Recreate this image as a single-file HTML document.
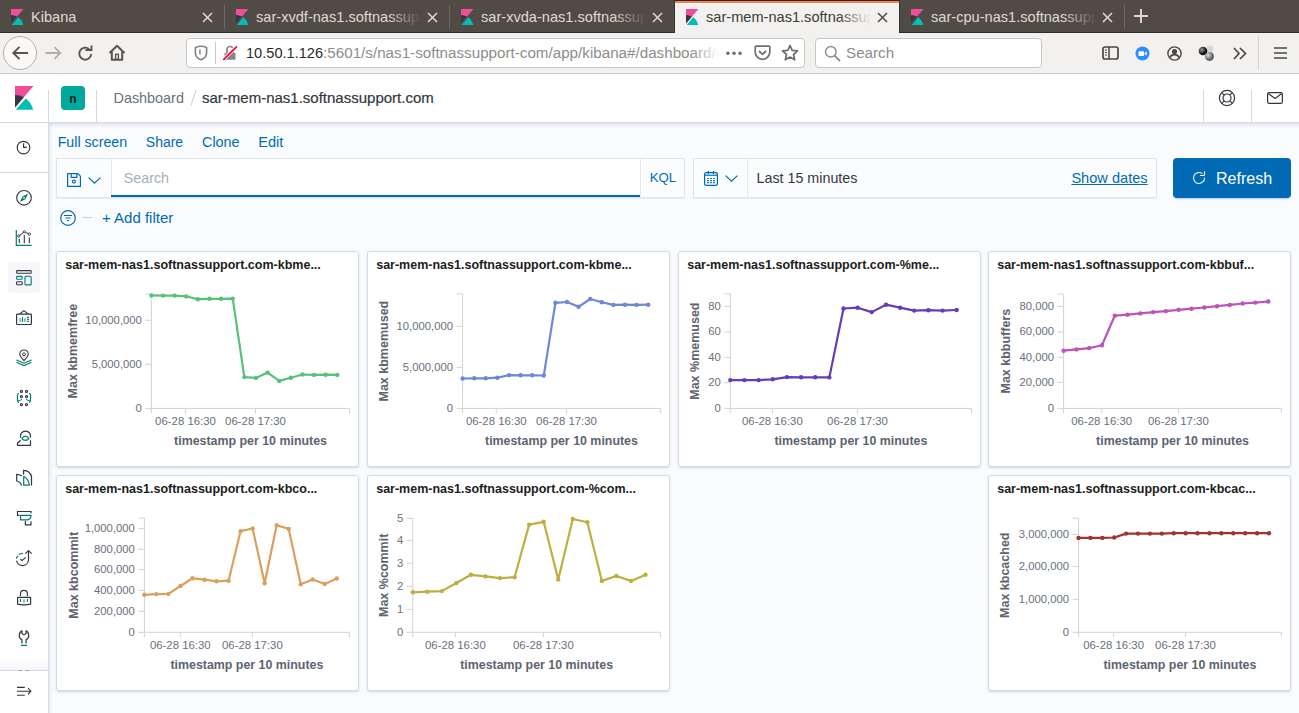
<!DOCTYPE html><html><head><meta charset="utf-8"><style>
*{box-sizing:border-box;margin:0;padding:0}
html,body{width:1299px;height:713px;overflow:hidden;background:#fafbfd;font-family:"Liberation Sans",sans-serif;position:relative}
.a{position:absolute;white-space:nowrap}
svg{position:absolute;overflow:visible}
svg text{font-family:"Liberation Sans",sans-serif}
</style></head><body>
<div class="a" style="left:0;top:0;width:1299px;height:33px;background:#504c45"></div>
<div class="a" style="left:0;top:32px;width:1299px;height:1px;background:#2f2d29"></div>
<svg style="left:8.7px;top:9px" width="16.0" height="16.0" viewBox="0 0 32 32"><path fill="#F04E98" d="M4 0v28.789L28.935.017z"/><path fill="#343741" d="M4 12v16.789l11.906-13.738A24.721 24.721 0 0 0 4 12"/><path fill="#00BFB3" d="M18.479 16.664L6.268 30.754l-1.073 1.237h23.191c-1.252-6.292-4.883-11.719-9.908-15.327"/></svg>
<div class="a" style="left:31px;top:7px;width:164px;height:20px;overflow:hidden;font-size:14.6px;color:#dfdbd2;line-height:20px">Kibana</div>
<div class="a" style="left:163px;top:6px;width:33px;height:22px;background:linear-gradient(to right,#504c4500,#504c45)"></div>
<svg style="left:201.5px;top:11.5px" width="11" height="11" viewBox="0 0 11 11"><path d="M1 1L10 10M10 1L1 10" stroke="#dfdbd2" stroke-width="1.5"/></svg>
<div class="a" style="left:224px;top:5px;width:1px;height:24px;background:#6e6a63"></div>
<svg style="left:233.7px;top:9px" width="16.0" height="16.0" viewBox="0 0 32 32"><path fill="#F04E98" d="M4 0v28.789L28.935.017z"/><path fill="#343741" d="M4 12v16.789l11.906-13.738A24.721 24.721 0 0 0 4 12"/><path fill="#00BFB3" d="M18.479 16.664L6.268 30.754l-1.073 1.237h23.191c-1.252-6.292-4.883-11.719-9.908-15.327"/></svg>
<div class="a" style="left:256px;top:7px;width:164px;height:20px;overflow:hidden;font-size:14.6px;color:#dfdbd2;line-height:20px">sar-xvdf-nas1.softnassupport</div>
<div class="a" style="left:388px;top:6px;width:33px;height:22px;background:linear-gradient(to right,#504c4500,#504c45)"></div>
<svg style="left:426.5px;top:11.5px" width="11" height="11" viewBox="0 0 11 11"><path d="M1 1L10 10M10 1L1 10" stroke="#dfdbd2" stroke-width="1.5"/></svg>
<div class="a" style="left:449px;top:5px;width:1px;height:24px;background:#6e6a63"></div>
<svg style="left:458.7px;top:9px" width="16.0" height="16.0" viewBox="0 0 32 32"><path fill="#F04E98" d="M4 0v28.789L28.935.017z"/><path fill="#343741" d="M4 12v16.789l11.906-13.738A24.721 24.721 0 0 0 4 12"/><path fill="#00BFB3" d="M18.479 16.664L6.268 30.754l-1.073 1.237h23.191c-1.252-6.292-4.883-11.719-9.908-15.327"/></svg>
<div class="a" style="left:481px;top:7px;width:164px;height:20px;overflow:hidden;font-size:14.6px;color:#dfdbd2;line-height:20px">sar-xvda-nas1.softnassupport</div>
<div class="a" style="left:613px;top:6px;width:33px;height:22px;background:linear-gradient(to right,#504c4500,#504c45)"></div>
<svg style="left:651.5px;top:11.5px" width="11" height="11" viewBox="0 0 11 11"><path d="M1 1L10 10M10 1L1 10" stroke="#dfdbd2" stroke-width="1.5"/></svg>
<div class="a" style="left:675px;top:0;width:224px;height:33px;background:#f2f1f0"></div>
<div class="a" style="left:675px;top:0;width:225px;height:1px;background:#262b2a"></div>
<div class="a" style="left:675px;top:1px;width:224px;height:2px;background:#f87f4f"></div>
<div class="a" style="left:675px;top:3px;width:224px;height:1px;background:#fafafa"></div>
<div class="a" style="left:674px;top:0;width:1px;height:33px;background:#35332f"></div>
<div class="a" style="left:899px;top:0;width:1px;height:32px;background:#35332f"></div>
<svg style="left:683.7px;top:9px" width="16.0" height="16.0" viewBox="0 0 32 32"><path fill="#F04E98" d="M4 0v28.789L28.935.017z"/><path fill="#343741" d="M4 12v16.789l11.906-13.738A24.721 24.721 0 0 0 4 12"/><path fill="#00BFB3" d="M18.479 16.664L6.268 30.754l-1.073 1.237h23.191c-1.252-6.292-4.883-11.719-9.908-15.327"/></svg>
<div class="a" style="left:706px;top:7px;width:164px;height:20px;overflow:hidden;font-size:14.6px;color:#3c3b37;line-height:20px">sar-mem-nas1.softnassupport</div>
<div class="a" style="left:838px;top:6px;width:33px;height:22px;background:linear-gradient(to right,#f2f1f000,#f2f1f0)"></div>
<svg style="left:876.5px;top:11.5px" width="11" height="11" viewBox="0 0 11 11"><path d="M1 1L10 10M10 1L1 10" stroke="#4c4b47" stroke-width="1.5"/></svg>
<svg style="left:908.7px;top:9px" width="16.0" height="16.0" viewBox="0 0 32 32"><path fill="#F04E98" d="M4 0v28.789L28.935.017z"/><path fill="#343741" d="M4 12v16.789l11.906-13.738A24.721 24.721 0 0 0 4 12"/><path fill="#00BFB3" d="M18.479 16.664L6.268 30.754l-1.073 1.237h23.191c-1.252-6.292-4.883-11.719-9.908-15.327"/></svg>
<div class="a" style="left:931px;top:7px;width:164px;height:20px;overflow:hidden;font-size:14.6px;color:#dfdbd2;line-height:20px">sar-cpu-nas1.softnassupport</div>
<div class="a" style="left:1063px;top:6px;width:33px;height:22px;background:linear-gradient(to right,#504c4500,#504c45)"></div>
<svg style="left:1101.5px;top:11.5px" width="11" height="11" viewBox="0 0 11 11"><path d="M1 1L10 10M10 1L1 10" stroke="#dfdbd2" stroke-width="1.5"/></svg>
<div class="a" style="left:1124px;top:5px;width:1px;height:24px;background:#6e6a63"></div>
<svg style="left:1134px;top:9px" width="14" height="14" viewBox="0 0 14 14"><path d="M7 0V14M0 7H14" stroke="#dfdbd2" stroke-width="1.9"/></svg>
<div class="a" style="left:0;top:33px;width:1299px;height:41px;background:#f2f1f0"></div>
<div class="a" style="left:0;top:73px;width:1299px;height:1px;background:#cdcbc8"></div>
<div class="a" style="left:3px;top:36px;width:34px;height:34px;border-radius:50%;border:1px solid #b3b1ad;background:#faf9f8"></div>
<svg style="left:11px;top:45px" width="18" height="16" viewBox="0 0 18 16"><path d="M17 8H2.5M8.5 1.8L2.3 8L8.5 14.2" stroke="#575653" stroke-width="1.9" fill="none"/></svg>
<svg style="left:45px;top:46px" width="17" height="14" viewBox="0 0 17 14"><path d="M0.5 7H15M9.5 1.2L15.3 7L9.5 12.8" stroke="#b0afac" stroke-width="1.8" fill="none"/></svg>
<svg style="left:77px;top:45px" width="17" height="17" viewBox="0 0 17 17"><path d="M14.2 9A6 6 0 1 1 12.2 4.2" stroke="#575653" stroke-width="1.9" fill="none"/><path d="M8.5 5H14.5V0.6" stroke="#575653" stroke-width="1.9" fill="none"/></svg>
<svg style="left:108px;top:44px" width="18" height="18" viewBox="0 0 18 18"><path d="M1.5 9L9 1.8L16.5 9M3.8 7.5V15.8H14.2V7.5" stroke="#575653" stroke-width="2" fill="none" stroke-linejoin="round"/><rect x="7.6" y="10.3" width="2.8" height="5" stroke="#575653" stroke-width="1.3" fill="none"/></svg>
<div class="a" style="left:186px;top:38px;width:619px;height:30px;background:#fff;border:1px solid #c9c7c4;border-radius:4px"></div>
<svg style="left:194px;top:45px" width="14" height="16" viewBox="0 0 14 16"><path d="M7 1.3C9 1.3 11 1.8 12.6 2.6V7.5C12.6 11 10.3 13.6 7 14.8C3.7 13.6 1.4 11 1.4 7.5V2.6C3 1.8 5 1.3 7 1.3Z" stroke="#808080" stroke-width="1.6" fill="none"/><path d="M5.2 4.5L6.6 4.2V10L5.2 9Z" fill="#808080"/></svg>
<div class="a" style="left:215px;top:42px;width:1px;height:22px;background:#c9c7c4"></div>
<svg style="left:222px;top:45px" width="16" height="16" viewBox="0 0 16 16"><path d="M2.5 8H13.5V13.8A1 1 0 0 1 12.5 14.8H3.5A1 1 0 0 1 2.5 13.8Z" fill="#878787"/><path d="M5 8V4.5A3 3 0 0 1 11 4.5V8" stroke="#878787" stroke-width="1.7" fill="none"/><path d="M0.5 15.5L15.5 0.5" stroke="#fff" stroke-width="3.2"/><path d="M1.8 14.4L14.4 1.8" stroke="#ff0039" stroke-width="1.8" stroke-linecap="round"/></svg>
<div class="a" style="left:246px;top:44px;font-size:15.2px;line-height:18px;color:#8e8d8a;width:472px;overflow:hidden"><span style="color:#2a2a28;font-size:14.6px">10.50.1.126</span>:5601/s/nas1-softnassupport-com/app/kibana#/dashboard/e0a1b2</div>
<div class="a" style="left:692px;top:40px;width:27px;height:26px;background:linear-gradient(to right,#fff0,#fff)"></div>
<svg style="left:725px;top:51px" width="18" height="5" viewBox="0 0 18 5"><circle cx="2.9" cy="2.3" r="1.75" fill="#6e6e6e"/><circle cx="9" cy="2.3" r="1.75" fill="#6e6e6e"/><circle cx="15.1" cy="2.3" r="1.75" fill="#6e6e6e"/></svg>
<svg style="left:753.5px;top:45px" width="17" height="16" viewBox="0 0 17 16"><path d="M2.2 1.2H14.8A1 1 0 0 1 15.8 2.2V7A7.3 7.3 0 0 1 1.2 7V2.2A1 1 0 0 1 2.2 1.2Z" stroke="#6e6e6e" stroke-width="1.7" fill="none"/><path d="M5 6L8.5 9.3L12 6" stroke="#6e6e6e" stroke-width="1.8" fill="none"/></svg>
<svg style="left:781px;top:44px" width="18" height="18" viewBox="0 0 18 18"><path d="M9 1.5L11.2 6.4L16.5 6.9L12.5 10.5L13.7 15.8L9 13L4.3 15.8L5.5 10.5L1.5 6.9L6.8 6.4Z" stroke="#6e6e6e" stroke-width="1.7" fill="none" stroke-linejoin="round"/></svg>
<div class="a" style="left:815px;top:38px;width:227px;height:30px;background:#fff;border:1px solid #c9c7c4;border-radius:4px"></div>
<svg style="left:824px;top:45px" width="17" height="17" viewBox="0 0 17 17"><circle cx="6.8" cy="6.8" r="5.3" stroke="#8e8e8e" stroke-width="1.5" fill="none"/><path d="M10.8 10.8L15.5 15.5" stroke="#8e8e8e" stroke-width="1.8" stroke-linecap="round"/></svg>
<div class="a" style="left:846px;top:44px;font-size:15.2px;line-height:18px;color:#8e8d8a">Search</div>
<svg style="left:1102px;top:46px" width="17" height="14" viewBox="0 0 17 14"><rect x="1" y="1" width="15" height="12" rx="2" stroke="#4a4946" stroke-width="1.7" fill="none"/><path d="M7 1V13" stroke="#4a4946" stroke-width="1.5"/><path d="M3 4H5M3 6.5H5M3 9H5" stroke="#4a4946" stroke-width="1"/></svg>
<svg style="left:1135px;top:46px" width="15" height="15" viewBox="0 0 15 15"><circle cx="7.5" cy="7.5" r="7" fill="#2d8cff"/><path d="M3.5 5.2H8.3A0.8 0.8 0 0 1 9.1 6V10H4.3A0.8 0.8 0 0 1 3.5 9.2Z" fill="#fff"/><path d="M9.6 7L11.8 5.4V9.6L9.6 8Z" fill="#fff"/></svg>
<svg style="left:1167px;top:46px" width="15" height="15" viewBox="0 0 15 15"><circle cx="7.5" cy="7.5" r="6.6" stroke="#4a4946" stroke-width="1.4" fill="none"/><circle cx="7.5" cy="5.6" r="2.6" fill="#4a4946"/><path d="M2.8 11.5C4 9.3 5.7 8.6 7.5 8.6S11 9.3 12.2 11.5" stroke="#4a4946" stroke-width="1.6" fill="none"/></svg>
<svg style="left:1198px;top:45px" width="18" height="17" viewBox="0 0 18 17"><defs><radialGradient id="bg1" cx="35%" cy="35%"><stop offset="0" stop-color="#999"/><stop offset="1" stop-color="#111"/></radialGradient><radialGradient id="bg2" cx="35%" cy="35%"><stop offset="0" stop-color="#ddd"/><stop offset="1" stop-color="#666"/></radialGradient></defs><circle cx="12" cy="4" r="3.5" fill="#d8d8d8"/><circle cx="5" cy="6" r="4.3" fill="url(#bg1)"/><circle cx="11.5" cy="11.5" r="4.5" fill="url(#bg2)"/></svg>
<svg style="left:1233px;top:47px" width="14" height="13" viewBox="0 0 14 13"><path d="M1 1L6 6.5L1 12M7 1L12.5 6.5L7 12" stroke="#4a4946" stroke-width="1.7" fill="none"/></svg>
<div class="a" style="left:1258px;top:36px;width:1px;height:34px;background:#d6d4d1"></div>
<svg style="left:1274px;top:47px" width="13" height="12" viewBox="0 0 13 12"><path d="M0 1H13M0 6H13M0 11H13" stroke="#4a4946" stroke-width="1.6"/></svg>
<div class="a" style="left:0;top:74px;width:1299px;height:49px;background:#fff;border-bottom:1px solid #d3dae6"></div>
<div class="a" style="left:0;top:123px;width:1299px;height:5px;background:linear-gradient(rgba(152,162,179,.28),rgba(152,162,179,.08) 60%,rgba(152,162,179,0))"></div>
<svg style="left:11.96px;top:86px" width="23.808" height="23.808" viewBox="0 0 32 32"><path fill="#F04E98" d="M4 0v28.789L28.935.017z"/><path fill="#343741" d="M4 12v16.789l11.906-13.738A24.721 24.721 0 0 0 4 12"/><path fill="#00BFB3" d="M18.479 16.664L6.268 30.754l-1.073 1.237h23.191c-1.252-6.292-4.883-11.719-9.908-15.327"/></svg>
<div class="a" style="left:48px;top:90px;width:1px;height:33px;background:#d3dae6"></div>
<div class="a" style="left:61px;top:86px;width:24px;height:24px;background:#00a99c;border-radius:4px;color:#1a1c21;font-size:12px;font-weight:bold;text-align:center;line-height:26px">n</div>
<div class="a" style="left:96px;top:90px;width:1px;height:33px;background:#d3dae6"></div>
<div class="a" style="left:113.5px;top:90px;font-size:14.4px;line-height:17px;color:#69707d">Dashboard</div>
<svg style="left:0;top:0" width="300" height="120"><path d="M195.9 90L191.1 105.4" stroke="#c9ced6" stroke-width="1"/></svg>
<div class="a" style="left:202px;top:89.2px;font-size:15px;line-height:17px;color:#343741;-webkit-text-stroke:0.2px #343741">sar-mem-nas1.softnassupport.com</div>
<div class="a" style="left:1203px;top:90px;width:1px;height:33px;background:#d3dae6"></div>
<div class="a" style="left:1251px;top:90px;width:1px;height:33px;background:#d3dae6"></div>
<svg style="left:1218px;top:89.2px" width="18" height="18" viewBox="0 0 18 18"><circle cx="9" cy="9" r="7.6" stroke="#343741" stroke-width="1.2" fill="none"/><circle cx="9" cy="9" r="4" stroke="#343741" stroke-width="1.2" fill="none"/><path d="M3.6 3.6L6.2 6.2M14.4 3.6L11.8 6.2M3.6 14.4L6.2 11.8M14.4 14.4L11.8 11.8" stroke="#343741" stroke-width="1.2"/></svg>
<svg style="left:1267px;top:92px" width="16" height="12" viewBox="0 0 16 12"><rect x="0.6" y="0.6" width="14.8" height="10.8" rx="1.6" stroke="#343741" stroke-width="1.2" fill="none"/><path d="M1.2 1.4L8 6.4L14.8 1.4" stroke="#343741" stroke-width="1.2" fill="none"/></svg>
<div class="a" style="left:0;top:123px;width:48px;height:590px;background:#fff"></div>
<div class="a" style="left:48px;top:123px;width:1px;height:590px;background:#d3dae6"></div>
<div class="a" style="left:49px;top:123px;width:4px;height:590px;background:linear-gradient(to right,rgba(152,162,179,.18),rgba(152,162,179,0))"></div>
<div class="a" style="left:0;top:172px;width:48px;height:1px;background:#d3dae6"></div>
<div class="a" style="left:0;top:670px;width:48px;height:1px;background:#d3dae6"></div>
<div class="a" style="left:8px;top:262px;width:32px;height:31px;background:#f5f7fa;border-radius:4px"></div>
<div class="a" style="left:0;top:657px;width:48px;height:13px;background:linear-gradient(#fff0,#f5f7fa)"></div>
<svg style="left:0;top:0" width="49" height="713" viewBox="0 0 49 713"><circle cx="23.5" cy="147.6" r="6.3" stroke="#343741" stroke-width="1.15" fill="none"/><path d="M23.6 143.3V147.4H26.8" stroke="#343741" stroke-width="1.15" fill="none"/><circle cx="24" cy="197.8" r="7.3" stroke="#343741" stroke-width="1.15" fill="none"/><path d="M28.2 193.6L25.4 199.2L19.8 202L22.6 196.4Z" fill="#017d73"/><circle cx="24" cy="197.8" r="0.9" fill="#fff"/><path d="M16.3 230V245.3H31.6" stroke="#017d73" stroke-width="1.2" fill="none"/><path d="M19.3 239V243.2M24.3 235V243.2M29.3 237.5V243.2" stroke="#343741" stroke-width="1.1"/><path d="M18.8 236L24.3 231.8L29.3 234.1" stroke="#343741" stroke-width="1" fill="none"/><circle cx="18.8" cy="236" r="1.2" stroke="#343741" stroke-width="0.9" fill="#fff"/><circle cx="24.3" cy="231.8" r="1.2" stroke="#343741" stroke-width="0.9" fill="#fff"/><circle cx="29.3" cy="234.1" r="1.2" stroke="#343741" stroke-width="0.9" fill="#fff"/><rect x="16.6" y="270.6" width="14.6" height="2.6" rx="0.8" stroke="#343741" stroke-width="1.1" fill="none"/><rect x="16.6" y="276.4" width="5.6" height="2.8" rx="0.8" stroke="#017d73" stroke-width="1.1" fill="none"/><rect x="16.6" y="281.8" width="5.6" height="3" rx="0.8" stroke="#343741" stroke-width="1.1" fill="none"/><rect x="25" y="276.3" width="6.2" height="8.6" rx="1" stroke="#017d73" stroke-width="1.1" fill="none"/><rect x="16.6" y="314.2" width="14.8" height="10.3" rx="0.8" stroke="#343741" stroke-width="1.2" fill="none"/><path d="M19.6 314L23.9 310.6L28.2 314" stroke="#343741" stroke-width="1.1" fill="none"/><rect x="19.4" y="318.3" width="1.5" height="3.6" fill="#017d73" fill-opacity=".6"/><rect x="21.9" y="317.1" width="1.2" height="4.8" fill="#017d73"/><rect x="24.2" y="318.2" width="1.5" height="3.7" fill="#017d73" fill-opacity=".6"/><path d="M26.9 317.4H28.9M26.9 319.4H28.9M26.9 321.4H28.9" stroke="#017d73" stroke-width="1.1"/><path d="M24 360.5C21.2 357.5 19.8 355.6 19.8 354.2A4.2 4.2 0 0 1 28.2 354.2C28.2 355.6 26.8 357.5 24 360.5Z" stroke="#343741" stroke-width="1.1" fill="none"/><circle cx="24" cy="354.3" r="1.4" stroke="#343741" stroke-width="1" fill="none"/><path d="M16.5 360L24 363.2L31.5 360M16.5 362.3L24 365.5L31.5 362.3" stroke="#017d73" stroke-width="1.2" fill="none"/><g fill="none" stroke="#343741" stroke-width="1.15"><circle cx="21.4" cy="391.4" r="1.05"/><circle cx="26.5" cy="391.4" r="1.05"/><circle cx="21.4" cy="396.5" r="1.05"/><circle cx="26.5" cy="396.5" r="1.05"/><circle cx="21.4" cy="404.5" r="1.05"/><circle cx="26.5" cy="404.5" r="1.05"/></g><path d="M18.6 393.5Q17.5 393.9 17.5 395.2V401L18.6 402.4M21.4 399.5Q20.5 400.6 17.7 401M29.4 393.5Q30.5 393.9 30.5 395.2V401L29.4 402.4M26.6 399.5Q27.5 400.6 30.3 401" stroke="#017d73" stroke-width="1.15" fill="none" stroke-linecap="round"/><path d="M20.6 437.6A5.1 5.1 0 1 1 30.4 437.6" stroke="#343741" stroke-width="1.2" fill="none"/><path d="M30.5 440.3V445.3H17.5V443.2L20.6 440.2" stroke="#343741" stroke-width="1.2" fill="none" stroke-linejoin="round"/><path d="M22 438.6C23.5 435.2 27.3 435.2 28.8 438.6C27.3 440.9 23.5 440.9 22 438.6Z" stroke="#017d73" stroke-width="1.2" fill="none"/><path d="M21.7 476Q19.6 474.4 16.7 474.4V481Q20.8 481.8 21.4 485.6" stroke="#343741" stroke-width="1.2" fill="none"/><path d="M23.6 474.4V470.4Q29.8 470.6 31.5 476.5V485.6" stroke="#343741" stroke-width="1.2" fill="none"/><path d="M23.7 476.3V485.2H29.4Q28.6 479.2 23.7 476.3Z" stroke="#017d73" stroke-width="1.2" fill="none" stroke-linejoin="round"/><path d="M19.6 515.3H17.5V511.5H31V513.3" stroke="#343741" stroke-width="1.2" fill="none"/><path d="M20.6 515.4H31.2Q30.5 519.3 27.8 519.8H20.6Z" stroke="#017d73" stroke-width="1.2" fill="none" stroke-linejoin="round"/><path d="M25.4 521V524.9H31V521.3" stroke="#343741" stroke-width="1.2" fill="none"/><path d="M16.6 560.6A6 6 0 0 0 28.5 560V551.2M25.3 553.6L28.5 550.6L31.7 553.6" stroke="#343741" stroke-width="1.2" fill="none" stroke-linejoin="round"/><path d="M16.4 558.2L17.7 556.2M19.3 554.3L22.6 553.3" stroke="#017d73" stroke-width="1.2" fill="none" stroke-linecap="round"/><path d="M20.2 559.3L22.1 560.6L25.6 557.4" stroke="#343741" stroke-width="1.2" fill="none"/><path d="M20.5 595.6V593.8A3.45 3.45 0 0 1 27.4 593.8V595.6" stroke="#343741" stroke-width="1.2" fill="none" stroke-linecap="round"/><path d="M17.6 597.4H30.6V604.2Q24 605.6 17.6 604.2Z" stroke="#343741" stroke-width="1.2" fill="none" stroke-linejoin="round"/><path d="M20.5 599.4V601.5M27.4 599.4V601.5" stroke="#017d73" stroke-width="1.2" stroke-linecap="round"/><rect x="23.2" y="599.3" width="1.6" height="3.4" fill="#017d73" fill-opacity=".6"/><path d="M21.9 643.6V639.6Q19.3 638.3 19.3 635.4Q19.3 632.1 21.9 630.9V633.4Q24 635.9 26.1 633.4V630.9Q28.7 632.1 28.7 635.4Q28.7 638.3 26.1 639.6V643.6" stroke="#343741" stroke-width="1.2" fill="none" stroke-linejoin="round"/><path d="M21.5 645.4H26.5" stroke="#017d73" stroke-width="1.2" stroke-linecap="round"/><path d="M17 687.4H24.8M17 691.2H30.6M17 695.2H24.8M28 688.2L30.9 691.2L28 694.4" stroke="#343741" stroke-width="1.1" fill="none"/><path d="M18.7 670.5H22M25.6 670.5H28.9" stroke="#9aa0a9" stroke-width="1"/></svg>
<div class="a" style="left:57.7px;top:132.5px;font-size:14.2px;line-height:18px;color:#006bb4">Full screen</div>
<div class="a" style="left:145.8px;top:132.5px;font-size:14.0px;line-height:18px;color:#006bb4">Share</div>
<div class="a" style="left:202px;top:132.5px;font-size:14.4px;line-height:18px;color:#006bb4">Clone</div>
<div class="a" style="left:258.2px;top:132.5px;font-size:14.6px;line-height:18px;color:#006bb4">Edit</div>
<div class="a" style="left:56px;top:158px;width:629px;height:40px;background:#fbfcfd;border:1px solid #dfe4ec;box-shadow:0 1px 1px rgba(152,162,179,.15)"></div>
<div class="a" style="left:110.5px;top:159px;width:530px;height:38px;background:#fff"></div>
<div class="a" style="left:110.5px;top:159px;width:1px;height:38px;background:#e4e8ee"></div>
<div class="a" style="left:110.5px;top:195px;width:530px;height:2px;background:#006bb4"></div>
<div class="a" style="left:640px;top:159px;width:1px;height:38px;background:#e4e8ee"></div>
<svg style="left:67px;top:173px" width="14" height="14" viewBox="0 0 14 14"><path d="M0.6 0.6H10.8L13.4 3.2V13.4H0.6Z" stroke="#006bb4" stroke-width="1.2" fill="none" stroke-linejoin="round"/><path d="M4.2 0.6V4.3H9.9V0.6" stroke="#006bb4" stroke-width="1.2" fill="none"/><circle cx="6.9" cy="8.6" r="1.5" stroke="#006bb4" stroke-width="1.1" fill="none"/></svg>
<svg style="left:87.5px;top:176.5px" width="13" height="7" viewBox="0 0 13 7"><path d="M0.6 0.6L6.5 6.2L12.4 0.6" stroke="#006bb4" stroke-width="1.2" fill="none"/></svg>
<div class="a" style="left:123.7px;top:169px;font-size:14.3px;line-height:18px;color:#a7afbe">Search</div>
<div class="a" style="left:649.7px;top:169px;font-size:13.2px;line-height:18px;color:#006bb4">KQL</div>
<div class="a" style="left:693px;top:158px;width:464px;height:40px;background:#fbfcfd;border:1px solid #dfe4ec;box-shadow:0 1px 1px rgba(152,162,179,.15)"></div>
<div class="a" style="left:747px;top:159px;width:1px;height:38px;background:#e4e8ee"></div>
<svg style="left:704px;top:171px" width="14" height="15" viewBox="0 0 14 15"><rect x="0.6" y="1.6" width="12.8" height="12.8" rx="1.6" stroke="#006bb4" stroke-width="1.2" fill="none"/><path d="M0.6 4.2H13.4" stroke="#006bb4" stroke-width="1.2"/><path d="M4.3 0V3M9.5 0V3" stroke="#006bb4" stroke-width="1.2"/><path d="M3.1 7.5H4.9M6.1 7.5H7.9M9.1 7.5H10.9M3.1 9.6H4.9M6.1 9.6H7.9M9.1 9.6H10.9M3.1 11.6H4.9M6.1 11.6H7.9M9.1 11.6H10.9" stroke="#006bb4" stroke-width="1.1"/></svg>
<svg style="left:725px;top:175px" width="13" height="7" viewBox="0 0 13 7"><path d="M0.6 0.6L6.5 6.2L12.4 0.6" stroke="#006bb4" stroke-width="1.2" fill="none"/></svg>
<div class="a" style="left:756.5px;top:168.5px;font-size:14.3px;line-height:18px;color:#343741">Last 15 minutes</div>
<div class="a" style="left:1071.4px;top:169px;font-size:14.6px;line-height:18px;color:#006bb4;text-decoration:underline">Show dates</div>
<div class="a" style="left:1173px;top:158px;width:118px;height:40px;background:#006bb4;border-radius:4px;box-shadow:0 2px 2px -1px rgba(0,107,180,.3)"></div>
<svg style="left:1190.5px;top:170px" width="16" height="16" viewBox="0 0 16 16"><path fill="#fff" d="M11.228 2.942a.5.5 0 1 1-.538.842A5 5 0 1 0 13 8a.5.5 0 1 1 1 0 6 6 0 1 1-2.772-5.058zM14 1.5v3A1.5 1.5 0 0 1 12.5 6h-3a.5.5 0 0 1 0-1h3a.5.5 0 0 0 .5-.5v-3a.5.5 0 1 1 1 0z"/></svg>
<div class="a" style="left:1216px;top:170px;font-size:16px;line-height:18px;color:#fff">Refresh</div>
<svg style="left:60px;top:210px" width="16" height="16" viewBox="0 0 16 16"><circle cx="8" cy="8" r="7.3" stroke="#006bb4" stroke-width="1.2" fill="none"/><path d="M4 5.5H12M5.5 8H10.5M7 10.5H9" stroke="#006bb4" stroke-width="1.2"/></svg>
<div class="a" style="left:82px;top:217px;width:10px;height:1px;background:#c9d1dd"></div>
<div class="a" style="left:102px;top:209px;font-size:15px;line-height:18px;color:#006bb4">+ Add filter</div>
<div class="a" style="left:56px;top:251px;width:303px;height:216px;background:#fff;border:1px solid #d3dae6;border-radius:3px;box-shadow:0 1px 3px rgba(152,162,179,.25),0 2px 2px -1px rgba(152,162,179,.2)"></div>
<div class="a" style="left:65.2px;top:257.2px;font-size:12.5px;line-height:16px;font-weight:bold;color:#1a1c21">sar-mem-nas1.softnassupport.com-kbme...</div>
<div class="a" style="left:367px;top:251px;width:303px;height:216px;background:#fff;border:1px solid #d3dae6;border-radius:3px;box-shadow:0 1px 3px rgba(152,162,179,.25),0 2px 2px -1px rgba(152,162,179,.2)"></div>
<div class="a" style="left:376.2px;top:257.2px;font-size:12.5px;line-height:16px;font-weight:bold;color:#1a1c21">sar-mem-nas1.softnassupport.com-kbme...</div>
<div class="a" style="left:678px;top:251px;width:303px;height:216px;background:#fff;border:1px solid #d3dae6;border-radius:3px;box-shadow:0 1px 3px rgba(152,162,179,.25),0 2px 2px -1px rgba(152,162,179,.2)"></div>
<div class="a" style="left:687.2px;top:257.2px;font-size:12.5px;line-height:16px;font-weight:bold;color:#1a1c21">sar-mem-nas1.softnassupport.com-%me...</div>
<div class="a" style="left:988px;top:251px;width:303px;height:216px;background:#fff;border:1px solid #d3dae6;border-radius:3px;box-shadow:0 1px 3px rgba(152,162,179,.25),0 2px 2px -1px rgba(152,162,179,.2)"></div>
<div class="a" style="left:997.2px;top:257.2px;font-size:12.5px;line-height:16px;font-weight:bold;color:#1a1c21">sar-mem-nas1.softnassupport.com-kbbuf...</div>
<div class="a" style="left:56px;top:475px;width:303px;height:216px;background:#fff;border:1px solid #d3dae6;border-radius:3px;box-shadow:0 1px 3px rgba(152,162,179,.25),0 2px 2px -1px rgba(152,162,179,.2)"></div>
<div class="a" style="left:65.2px;top:481.2px;font-size:12.5px;line-height:16px;font-weight:bold;color:#1a1c21">sar-mem-nas1.softnassupport.com-kbco...</div>
<div class="a" style="left:367px;top:475px;width:303px;height:216px;background:#fff;border:1px solid #d3dae6;border-radius:3px;box-shadow:0 1px 3px rgba(152,162,179,.25),0 2px 2px -1px rgba(152,162,179,.2)"></div>
<div class="a" style="left:376.2px;top:481.2px;font-size:12.5px;line-height:16px;font-weight:bold;color:#1a1c21">sar-mem-nas1.softnassupport.com-%com...</div>
<div class="a" style="left:988px;top:475px;width:303px;height:216px;background:#fff;border:1px solid #d3dae6;border-radius:3px;box-shadow:0 1px 3px rgba(152,162,179,.25),0 2px 2px -1px rgba(152,162,179,.2)"></div>
<div class="a" style="left:997.2px;top:481.2px;font-size:12.5px;line-height:16px;font-weight:bold;color:#1a1c21">sar-mem-nas1.softnassupport.com-kbcac...</div>
<svg style="left:0;top:0" width="1299" height="713" viewBox="0 0 1299 713"><path d="M151.4 293.9V408.4H349.6" stroke="#d3d3d3" stroke-width="1" fill="none"/><path d="M145.4 293.9H151.4" stroke="#d3d3d3" stroke-width="1"/><path d="M145.4 408.4H151.4" stroke="#d3d3d3" stroke-width="1"/><text x="141.9" y="411.79999999999995" text-anchor="end" font-size="11.3" fill="#69707d">0</text><path d="M145.4 364.3H151.4" stroke="#d3d3d3" stroke-width="1"/><text x="141.9" y="367.7" text-anchor="end" font-size="11.3" fill="#69707d">5,000,000</text><path d="M145.4 320.2H151.4" stroke="#d3d3d3" stroke-width="1"/><text x="141.9" y="323.59999999999997" text-anchor="end" font-size="11.3" fill="#69707d">10,000,000</text><path d="M151.4 408.4V413.4M349.6 408.4V413.4" stroke="#d3d3d3" stroke-width="1"/><path d="M185.5 408.4V413.4" stroke="#d3d3d3" stroke-width="1"/><text x="185.5" y="424.9" text-anchor="middle" font-size="11.4" fill="#69707d">06-28 16:30</text><path d="M255.5 408.4V413.4" stroke="#d3d3d3" stroke-width="1"/><text x="255.5" y="424.9" text-anchor="middle" font-size="11.4" fill="#69707d">06-28 17:30</text><text x="250.5" y="444.59999999999997" text-anchor="middle" font-size="12.4" font-weight="bold" fill="#5d636f">timestamp per 10 minutes</text><text transform="translate(77.0,351.15) rotate(-90)" text-anchor="middle" font-size="12.5" font-weight="bold" fill="#5d636f">Max kbmemfree</text><path d="M151.40 295.40 L163.02 295.60 L174.64 295.60 L186.26 296.40 L197.88 299.20 L209.49 298.80 L221.11 298.80 L232.73 298.60 L244.35 377.10 L255.97 377.90 L267.59 372.60 L279.21 380.90 L290.83 377.70 L302.44 374.50 L314.06 374.90 L325.68 374.70 L337.30 374.90" stroke="#57c17b" stroke-width="2.2" fill="none" stroke-linejoin="round"/><circle cx="151.40" cy="295.40" r="2.2" fill="#57c17b"/><circle cx="163.02" cy="295.60" r="2.2" fill="#57c17b"/><circle cx="174.64" cy="295.60" r="2.2" fill="#57c17b"/><circle cx="186.26" cy="296.40" r="2.2" fill="#57c17b"/><circle cx="197.88" cy="299.20" r="2.2" fill="#57c17b"/><circle cx="209.49" cy="298.80" r="2.2" fill="#57c17b"/><circle cx="221.11" cy="298.80" r="2.2" fill="#57c17b"/><circle cx="232.73" cy="298.60" r="2.2" fill="#57c17b"/><circle cx="244.35" cy="377.10" r="2.2" fill="#57c17b"/><circle cx="255.97" cy="377.90" r="2.2" fill="#57c17b"/><circle cx="267.59" cy="372.60" r="2.2" fill="#57c17b"/><circle cx="279.21" cy="380.90" r="2.2" fill="#57c17b"/><circle cx="290.83" cy="377.70" r="2.2" fill="#57c17b"/><circle cx="302.44" cy="374.50" r="2.2" fill="#57c17b"/><circle cx="314.06" cy="374.90" r="2.2" fill="#57c17b"/><circle cx="325.68" cy="374.70" r="2.2" fill="#57c17b"/><circle cx="337.30" cy="374.90" r="2.2" fill="#57c17b"/><path d="M462.6 293.9V408.4H660.3" stroke="#d3d3d3" stroke-width="1" fill="none"/><path d="M456.6 293.9H462.6" stroke="#d3d3d3" stroke-width="1"/><path d="M456.6 408.4H462.6" stroke="#d3d3d3" stroke-width="1"/><text x="453.1" y="411.79999999999995" text-anchor="end" font-size="11.3" fill="#69707d">0</text><path d="M456.6 367.3H462.6" stroke="#d3d3d3" stroke-width="1"/><text x="453.1" y="370.7" text-anchor="end" font-size="11.3" fill="#69707d">5,000,000</text><path d="M456.6 326.3H462.6" stroke="#d3d3d3" stroke-width="1"/><text x="453.1" y="329.7" text-anchor="end" font-size="11.3" fill="#69707d">10,000,000</text><path d="M462.6 408.4V413.4M660.3 408.4V413.4" stroke="#d3d3d3" stroke-width="1"/><path d="M496.3 408.4V413.4" stroke="#d3d3d3" stroke-width="1"/><text x="496.3" y="424.9" text-anchor="middle" font-size="11.4" fill="#69707d">06-28 16:30</text><path d="M566.5 408.4V413.4" stroke="#d3d3d3" stroke-width="1"/><text x="566.5" y="424.9" text-anchor="middle" font-size="11.4" fill="#69707d">06-28 17:30</text><text x="561.45" y="444.59999999999997" text-anchor="middle" font-size="12.4" font-weight="bold" fill="#5d636f">timestamp per 10 minutes</text><text transform="translate(388.0,351.15) rotate(-90)" text-anchor="middle" font-size="12.5" font-weight="bold" fill="#5d636f">Max kbmemused</text><path d="M462.60 378.50 L474.20 378.30 L485.80 378.30 L497.40 377.70 L509.00 375.10 L520.60 375.30 L532.20 375.30 L543.80 375.50 L555.40 302.80 L567.00 302.00 L578.60 306.80 L590.20 299.00 L601.80 302.20 L613.40 304.90 L625.00 304.70 L636.60 304.90 L648.20 304.70" stroke="#6f87d8" stroke-width="2.2" fill="none" stroke-linejoin="round"/><circle cx="462.60" cy="378.50" r="2.2" fill="#6f87d8"/><circle cx="474.20" cy="378.30" r="2.2" fill="#6f87d8"/><circle cx="485.80" cy="378.30" r="2.2" fill="#6f87d8"/><circle cx="497.40" cy="377.70" r="2.2" fill="#6f87d8"/><circle cx="509.00" cy="375.10" r="2.2" fill="#6f87d8"/><circle cx="520.60" cy="375.30" r="2.2" fill="#6f87d8"/><circle cx="532.20" cy="375.30" r="2.2" fill="#6f87d8"/><circle cx="543.80" cy="375.50" r="2.2" fill="#6f87d8"/><circle cx="555.40" cy="302.80" r="2.2" fill="#6f87d8"/><circle cx="567.00" cy="302.00" r="2.2" fill="#6f87d8"/><circle cx="578.60" cy="306.80" r="2.2" fill="#6f87d8"/><circle cx="590.20" cy="299.00" r="2.2" fill="#6f87d8"/><circle cx="601.80" cy="302.20" r="2.2" fill="#6f87d8"/><circle cx="613.40" cy="304.90" r="2.2" fill="#6f87d8"/><circle cx="625.00" cy="304.70" r="2.2" fill="#6f87d8"/><circle cx="636.60" cy="304.90" r="2.2" fill="#6f87d8"/><circle cx="648.20" cy="304.70" r="2.2" fill="#6f87d8"/><path d="M730.3 293.9V408.4H971.5" stroke="#d3d3d3" stroke-width="1" fill="none"/><path d="M724.3 293.9H730.3" stroke="#d3d3d3" stroke-width="1"/><path d="M724.3 408.4H730.3" stroke="#d3d3d3" stroke-width="1"/><text x="720.8" y="411.79999999999995" text-anchor="end" font-size="11.3" fill="#69707d">0</text><path d="M724.3 382.6H730.3" stroke="#d3d3d3" stroke-width="1"/><text x="720.8" y="386.0" text-anchor="end" font-size="11.3" fill="#69707d">20</text><path d="M724.3 357.4H730.3" stroke="#d3d3d3" stroke-width="1"/><text x="720.8" y="360.79999999999995" text-anchor="end" font-size="11.3" fill="#69707d">40</text><path d="M724.3 332.0H730.3" stroke="#d3d3d3" stroke-width="1"/><text x="720.8" y="335.4" text-anchor="end" font-size="11.3" fill="#69707d">60</text><path d="M724.3 306.4H730.3" stroke="#d3d3d3" stroke-width="1"/><text x="720.8" y="309.79999999999995" text-anchor="end" font-size="11.3" fill="#69707d">80</text><path d="M730.3 408.4V413.4M971.5 408.4V413.4" stroke="#d3d3d3" stroke-width="1"/><path d="M772.4 408.4V413.4" stroke="#d3d3d3" stroke-width="1"/><text x="772.4" y="424.9" text-anchor="middle" font-size="11.4" fill="#69707d">06-28 16:30</text><path d="M857.5 408.4V413.4" stroke="#d3d3d3" stroke-width="1"/><text x="857.5" y="424.9" text-anchor="middle" font-size="11.4" fill="#69707d">06-28 17:30</text><text x="850.9" y="444.59999999999997" text-anchor="middle" font-size="12.4" font-weight="bold" fill="#5d636f">timestamp per 10 minutes</text><text transform="translate(698.9,351.15) rotate(-90)" text-anchor="middle" font-size="12.5" font-weight="bold" fill="#5d636f">Max %memused</text><path d="M730.30 380.10 L744.45 380.10 L758.60 380.10 L772.75 379.30 L786.90 377.10 L801.05 377.30 L815.20 377.30 L829.35 377.40 L843.50 308.50 L857.65 307.70 L871.80 312.10 L885.95 304.70 L900.10 307.70 L914.25 310.60 L928.40 310.20 L942.55 310.60 L956.70 310.00" stroke="#663db8" stroke-width="2.2" fill="none" stroke-linejoin="round"/><circle cx="730.30" cy="380.10" r="2.2" fill="#663db8"/><circle cx="744.45" cy="380.10" r="2.2" fill="#663db8"/><circle cx="758.60" cy="380.10" r="2.2" fill="#663db8"/><circle cx="772.75" cy="379.30" r="2.2" fill="#663db8"/><circle cx="786.90" cy="377.10" r="2.2" fill="#663db8"/><circle cx="801.05" cy="377.30" r="2.2" fill="#663db8"/><circle cx="815.20" cy="377.30" r="2.2" fill="#663db8"/><circle cx="829.35" cy="377.40" r="2.2" fill="#663db8"/><circle cx="843.50" cy="308.50" r="2.2" fill="#663db8"/><circle cx="857.65" cy="307.70" r="2.2" fill="#663db8"/><circle cx="871.80" cy="312.10" r="2.2" fill="#663db8"/><circle cx="885.95" cy="304.70" r="2.2" fill="#663db8"/><circle cx="900.10" cy="307.70" r="2.2" fill="#663db8"/><circle cx="914.25" cy="310.60" r="2.2" fill="#663db8"/><circle cx="928.40" cy="310.20" r="2.2" fill="#663db8"/><circle cx="942.55" cy="310.60" r="2.2" fill="#663db8"/><circle cx="956.70" cy="310.00" r="2.2" fill="#663db8"/><path d="M1063.6 293.9V408.4H1281.4" stroke="#d3d3d3" stroke-width="1" fill="none"/><path d="M1057.6 293.9H1063.6" stroke="#d3d3d3" stroke-width="1"/><path d="M1057.6 408.4H1063.6" stroke="#d3d3d3" stroke-width="1"/><text x="1054.1" y="411.79999999999995" text-anchor="end" font-size="11.3" fill="#69707d">0</text><path d="M1057.6 382.4H1063.6" stroke="#d3d3d3" stroke-width="1"/><text x="1054.1" y="385.79999999999995" text-anchor="end" font-size="11.3" fill="#69707d">20,000</text><path d="M1057.6 357.4H1063.6" stroke="#d3d3d3" stroke-width="1"/><text x="1054.1" y="360.79999999999995" text-anchor="end" font-size="11.3" fill="#69707d">40,000</text><path d="M1057.6 332.0H1063.6" stroke="#d3d3d3" stroke-width="1"/><text x="1054.1" y="335.4" text-anchor="end" font-size="11.3" fill="#69707d">60,000</text><path d="M1057.6 306.4H1063.6" stroke="#d3d3d3" stroke-width="1"/><text x="1054.1" y="309.79999999999995" text-anchor="end" font-size="11.3" fill="#69707d">80,000</text><path d="M1063.6 408.4V413.4M1281.4 408.4V413.4" stroke="#d3d3d3" stroke-width="1"/><path d="M1101.7 408.4V413.4" stroke="#d3d3d3" stroke-width="1"/><text x="1101.7" y="424.9" text-anchor="middle" font-size="11.4" fill="#69707d">06-28 16:30</text><path d="M1178.4 408.4V413.4" stroke="#d3d3d3" stroke-width="1"/><text x="1178.4" y="424.9" text-anchor="middle" font-size="11.4" fill="#69707d">06-28 17:30</text><text x="1172.5" y="444.59999999999997" text-anchor="middle" font-size="12.4" font-weight="bold" fill="#5d636f">timestamp per 10 minutes</text><text transform="translate(1009.5,351.15) rotate(-90)" text-anchor="middle" font-size="12.5" font-weight="bold" fill="#5d636f">Max kbbuffers</text><path d="M1063.60 350.70 L1076.39 349.40 L1089.17 348.10 L1101.96 345.20 L1114.75 315.70 L1127.54 314.70 L1140.33 313.40 L1153.11 312.10 L1165.90 311.10 L1178.69 309.80 L1191.47 308.70 L1204.26 307.50 L1217.05 306.20 L1229.84 304.90 L1242.62 303.50 L1255.41 302.60 L1268.20 301.50" stroke="#bc52bc" stroke-width="2.2" fill="none" stroke-linejoin="round"/><circle cx="1063.60" cy="350.70" r="2.2" fill="#bc52bc"/><circle cx="1076.39" cy="349.40" r="2.2" fill="#bc52bc"/><circle cx="1089.17" cy="348.10" r="2.2" fill="#bc52bc"/><circle cx="1101.96" cy="345.20" r="2.2" fill="#bc52bc"/><circle cx="1114.75" cy="315.70" r="2.2" fill="#bc52bc"/><circle cx="1127.54" cy="314.70" r="2.2" fill="#bc52bc"/><circle cx="1140.33" cy="313.40" r="2.2" fill="#bc52bc"/><circle cx="1153.11" cy="312.10" r="2.2" fill="#bc52bc"/><circle cx="1165.90" cy="311.10" r="2.2" fill="#bc52bc"/><circle cx="1178.69" cy="309.80" r="2.2" fill="#bc52bc"/><circle cx="1191.47" cy="308.70" r="2.2" fill="#bc52bc"/><circle cx="1204.26" cy="307.50" r="2.2" fill="#bc52bc"/><circle cx="1217.05" cy="306.20" r="2.2" fill="#bc52bc"/><circle cx="1229.84" cy="304.90" r="2.2" fill="#bc52bc"/><circle cx="1242.62" cy="303.50" r="2.2" fill="#bc52bc"/><circle cx="1255.41" cy="302.60" r="2.2" fill="#bc52bc"/><circle cx="1268.20" cy="301.50" r="2.2" fill="#bc52bc"/><path d="M144.4 518.2V632.3H349.4" stroke="#d3d3d3" stroke-width="1" fill="none"/><path d="M138.4 518.2H144.4" stroke="#d3d3d3" stroke-width="1"/><path d="M138.4 632.3H144.4" stroke="#d3d3d3" stroke-width="1"/><text x="134.9" y="635.6999999999999" text-anchor="end" font-size="11.3" fill="#69707d">0</text><path d="M138.4 611.3H144.4" stroke="#d3d3d3" stroke-width="1"/><text x="134.9" y="614.6999999999999" text-anchor="end" font-size="11.3" fill="#69707d">200,000</text><path d="M138.4 590.3H144.4" stroke="#d3d3d3" stroke-width="1"/><text x="134.9" y="593.6999999999999" text-anchor="end" font-size="11.3" fill="#69707d">400,000</text><path d="M138.4 569.5H144.4" stroke="#d3d3d3" stroke-width="1"/><text x="134.9" y="572.9" text-anchor="end" font-size="11.3" fill="#69707d">600,000</text><path d="M138.4 549.3H144.4" stroke="#d3d3d3" stroke-width="1"/><text x="134.9" y="552.6999999999999" text-anchor="end" font-size="11.3" fill="#69707d">800,000</text><path d="M138.4 528.5H144.4" stroke="#d3d3d3" stroke-width="1"/><text x="134.9" y="531.9" text-anchor="end" font-size="11.3" fill="#69707d">1,000,000</text><path d="M144.4 632.3V637.3M349.4 632.3V637.3" stroke="#d3d3d3" stroke-width="1"/><path d="M180.3 632.3V637.3" stroke="#d3d3d3" stroke-width="1"/><text x="180.3" y="648.8" text-anchor="middle" font-size="11.4" fill="#69707d">06-28 16:30</text><path d="M252.4 632.3V637.3" stroke="#d3d3d3" stroke-width="1"/><text x="252.4" y="648.8" text-anchor="middle" font-size="11.4" fill="#69707d">06-28 17:30</text><text x="246.89999999999998" y="668.5" text-anchor="middle" font-size="12.4" font-weight="bold" fill="#5d636f">timestamp per 10 minutes</text><text transform="translate(77.5,575.25) rotate(-90)" text-anchor="middle" font-size="12.5" font-weight="bold" fill="#5d636f">Max kbcommit</text><path d="M144.40 594.80 L156.43 594.10 L168.45 593.90 L180.48 586.00 L192.50 578.30 L204.53 579.70 L216.55 581.30 L228.57 580.70 L240.60 531.10 L252.62 528.50 L264.65 583.30 L276.68 525.30 L288.70 528.90 L300.73 584.20 L312.75 579.50 L324.77 584.00 L336.80 578.50" stroke="#daa05d" stroke-width="2.2" fill="none" stroke-linejoin="round"/><circle cx="144.40" cy="594.80" r="2.2" fill="#daa05d"/><circle cx="156.43" cy="594.10" r="2.2" fill="#daa05d"/><circle cx="168.45" cy="593.90" r="2.2" fill="#daa05d"/><circle cx="180.48" cy="586.00" r="2.2" fill="#daa05d"/><circle cx="192.50" cy="578.30" r="2.2" fill="#daa05d"/><circle cx="204.53" cy="579.70" r="2.2" fill="#daa05d"/><circle cx="216.55" cy="581.30" r="2.2" fill="#daa05d"/><circle cx="228.57" cy="580.70" r="2.2" fill="#daa05d"/><circle cx="240.60" cy="531.10" r="2.2" fill="#daa05d"/><circle cx="252.62" cy="528.50" r="2.2" fill="#daa05d"/><circle cx="264.65" cy="583.30" r="2.2" fill="#daa05d"/><circle cx="276.68" cy="525.30" r="2.2" fill="#daa05d"/><circle cx="288.70" cy="528.90" r="2.2" fill="#daa05d"/><circle cx="300.73" cy="584.20" r="2.2" fill="#daa05d"/><circle cx="312.75" cy="579.50" r="2.2" fill="#daa05d"/><circle cx="324.77" cy="584.00" r="2.2" fill="#daa05d"/><circle cx="336.80" cy="578.50" r="2.2" fill="#daa05d"/><path d="M412.8 518.4V632.3H660.4" stroke="#d3d3d3" stroke-width="1" fill="none"/><path d="M406.8 518.4H412.8" stroke="#d3d3d3" stroke-width="1"/><path d="M406.8 632.3H412.8" stroke="#d3d3d3" stroke-width="1"/><text x="403.3" y="635.6999999999999" text-anchor="end" font-size="11.3" fill="#69707d">0</text><path d="M406.8 609.4H412.8" stroke="#d3d3d3" stroke-width="1"/><text x="403.3" y="612.8" text-anchor="end" font-size="11.3" fill="#69707d">1</text><path d="M406.8 586.4H412.8" stroke="#d3d3d3" stroke-width="1"/><text x="403.3" y="589.8" text-anchor="end" font-size="11.3" fill="#69707d">2</text><path d="M406.8 563.2H412.8" stroke="#d3d3d3" stroke-width="1"/><text x="403.3" y="566.6" text-anchor="end" font-size="11.3" fill="#69707d">3</text><path d="M406.8 540.4H412.8" stroke="#d3d3d3" stroke-width="1"/><text x="403.3" y="543.8" text-anchor="end" font-size="11.3" fill="#69707d">4</text><path d="M406.8 518.4H412.8" stroke="#d3d3d3" stroke-width="1"/><text x="403.3" y="521.8" text-anchor="end" font-size="11.3" fill="#69707d">5</text><path d="M412.8 632.3V637.3M660.4 632.3V637.3" stroke="#d3d3d3" stroke-width="1"/><path d="M455.4 632.3V637.3" stroke="#d3d3d3" stroke-width="1"/><text x="455.4" y="648.8" text-anchor="middle" font-size="11.4" fill="#69707d">06-28 16:30</text><path d="M543.4 632.3V637.3" stroke="#d3d3d3" stroke-width="1"/><text x="543.4" y="648.8" text-anchor="middle" font-size="11.4" fill="#69707d">06-28 17:30</text><text x="536.6" y="668.5" text-anchor="middle" font-size="12.4" font-weight="bold" fill="#5d636f">timestamp per 10 minutes</text><text transform="translate(388.3,575.3499999999999) rotate(-90)" text-anchor="middle" font-size="12.5" font-weight="bold" fill="#5d636f">Max %commit</text><path d="M412.80 592.30 L427.34 591.70 L441.89 591.10 L456.43 583.00 L470.98 574.80 L485.52 576.40 L500.06 578.10 L514.61 577.20 L529.15 524.60 L543.69 521.80 L558.24 579.50 L572.78 519.00 L587.33 522.20 L601.87 580.90 L616.41 576.00 L630.96 580.90 L645.50 574.80" stroke="#bfae40" stroke-width="2.2" fill="none" stroke-linejoin="round"/><circle cx="412.80" cy="592.30" r="2.2" fill="#bfae40"/><circle cx="427.34" cy="591.70" r="2.2" fill="#bfae40"/><circle cx="441.89" cy="591.10" r="2.2" fill="#bfae40"/><circle cx="456.43" cy="583.00" r="2.2" fill="#bfae40"/><circle cx="470.98" cy="574.80" r="2.2" fill="#bfae40"/><circle cx="485.52" cy="576.40" r="2.2" fill="#bfae40"/><circle cx="500.06" cy="578.10" r="2.2" fill="#bfae40"/><circle cx="514.61" cy="577.20" r="2.2" fill="#bfae40"/><circle cx="529.15" cy="524.60" r="2.2" fill="#bfae40"/><circle cx="543.69" cy="521.80" r="2.2" fill="#bfae40"/><circle cx="558.24" cy="579.50" r="2.2" fill="#bfae40"/><circle cx="572.78" cy="519.00" r="2.2" fill="#bfae40"/><circle cx="587.33" cy="522.20" r="2.2" fill="#bfae40"/><circle cx="601.87" cy="580.90" r="2.2" fill="#bfae40"/><circle cx="616.41" cy="576.00" r="2.2" fill="#bfae40"/><circle cx="630.96" cy="580.90" r="2.2" fill="#bfae40"/><circle cx="645.50" cy="574.80" r="2.2" fill="#bfae40"/><path d="M1078.5 518.2V632.3H1281.3" stroke="#d3d3d3" stroke-width="1" fill="none"/><path d="M1072.5 518.2H1078.5" stroke="#d3d3d3" stroke-width="1"/><path d="M1072.5 632.3H1078.5" stroke="#d3d3d3" stroke-width="1"/><text x="1069.0" y="635.6999999999999" text-anchor="end" font-size="11.3" fill="#69707d">0</text><path d="M1072.5 599.3H1078.5" stroke="#d3d3d3" stroke-width="1"/><text x="1069.0" y="602.6999999999999" text-anchor="end" font-size="11.3" fill="#69707d">1,000,000</text><path d="M1072.5 566.4H1078.5" stroke="#d3d3d3" stroke-width="1"/><text x="1069.0" y="569.8" text-anchor="end" font-size="11.3" fill="#69707d">2,000,000</text><path d="M1072.5 534.5H1078.5" stroke="#d3d3d3" stroke-width="1"/><text x="1069.0" y="537.9" text-anchor="end" font-size="11.3" fill="#69707d">3,000,000</text><path d="M1078.5 632.3V637.3M1281.3 632.3V637.3" stroke="#d3d3d3" stroke-width="1"/><path d="M1113.6 632.3V637.3" stroke="#d3d3d3" stroke-width="1"/><text x="1113.6" y="648.8" text-anchor="middle" font-size="11.4" fill="#69707d">06-28 16:30</text><path d="M1185.5 632.3V637.3" stroke="#d3d3d3" stroke-width="1"/><text x="1185.5" y="648.8" text-anchor="middle" font-size="11.4" fill="#69707d">06-28 17:30</text><text x="1179.9" y="668.5" text-anchor="middle" font-size="12.4" font-weight="bold" fill="#5d636f">timestamp per 10 minutes</text><text transform="translate(1009.3,575.25) rotate(-90)" text-anchor="middle" font-size="12.5" font-weight="bold" fill="#5d636f">Max kbcached</text><path d="M1078.50 537.90 L1090.41 537.90 L1102.31 537.90 L1114.22 537.50 L1126.12 533.60 L1138.03 533.60 L1149.94 533.60 L1161.84 533.60 L1173.75 533.20 L1185.66 533.20 L1197.56 533.20 L1209.47 533.20 L1221.38 533.20 L1233.28 533.20 L1245.19 533.20 L1257.09 533.20 L1269.00 533.20" stroke="#9e3533" stroke-width="2.2" fill="none" stroke-linejoin="round"/><circle cx="1078.50" cy="537.90" r="2.2" fill="#9e3533"/><circle cx="1090.41" cy="537.90" r="2.2" fill="#9e3533"/><circle cx="1102.31" cy="537.90" r="2.2" fill="#9e3533"/><circle cx="1114.22" cy="537.50" r="2.2" fill="#9e3533"/><circle cx="1126.12" cy="533.60" r="2.2" fill="#9e3533"/><circle cx="1138.03" cy="533.60" r="2.2" fill="#9e3533"/><circle cx="1149.94" cy="533.60" r="2.2" fill="#9e3533"/><circle cx="1161.84" cy="533.60" r="2.2" fill="#9e3533"/><circle cx="1173.75" cy="533.20" r="2.2" fill="#9e3533"/><circle cx="1185.66" cy="533.20" r="2.2" fill="#9e3533"/><circle cx="1197.56" cy="533.20" r="2.2" fill="#9e3533"/><circle cx="1209.47" cy="533.20" r="2.2" fill="#9e3533"/><circle cx="1221.38" cy="533.20" r="2.2" fill="#9e3533"/><circle cx="1233.28" cy="533.20" r="2.2" fill="#9e3533"/><circle cx="1245.19" cy="533.20" r="2.2" fill="#9e3533"/><circle cx="1257.09" cy="533.20" r="2.2" fill="#9e3533"/><circle cx="1269.00" cy="533.20" r="2.2" fill="#9e3533"/></svg>
</body></html>
